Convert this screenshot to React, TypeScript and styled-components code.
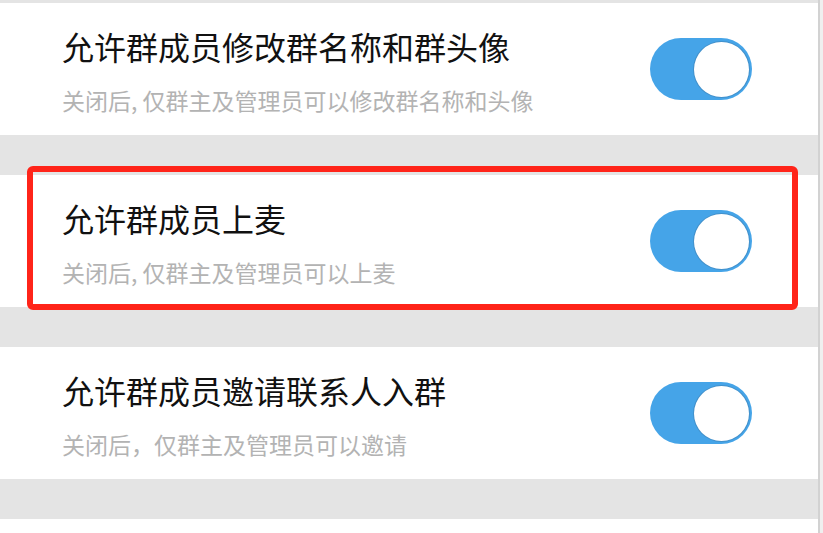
import styled, { createGlobalStyle } from 'styled-components';

const GlobalStyle = createGlobalStyle`
  html, body {
    margin: 0;
    padding: 0;
    background: #efefef;
  }
  body {
    font-family: 'Noto Sans CJK SC', 'Noto Sans', sans-serif;
  }
`;

interface SettingItem {
  id: number;
  title: string;
  desc: string;
  on: boolean;
  marked?: boolean;
}

const settings: SettingItem[] = [
  {
    id: 1,
    title: '允许群成员修改群名称和群头像',
    desc: '关闭后, 仅群主及管理员可以修改群名称和头像',
    on: true,
  },
  {
    id: 2,
    title: '允许群成员上麦',
    desc: '关闭后, 仅群主及管理员可以上麦',
    on: true,
    marked: true,
  },
  {
    id: 3,
    title: '允许群成员邀请联系人入群',
    desc: '关闭后，仅群主及管理员可以邀请',
    on: true,
  },
];

export default function App() {
  return (
    <>
      <GlobalStyle />
      <Page>
        <List>
          {settings.map((item) => (
            <Row key={item.id} $marked={item.marked}>
              <Texts>
                <Title>{item.title}</Title>
                <Desc>{item.desc}</Desc>
              </Texts>
              <Switch $on={item.on}>
                <Knob />
              </Switch>
            </Row>
          ))}
          <Row $tail />
        </List>
      </Page>
    </>
  );
}

const Page = styled.div`
  width: 818px;
  height: 533px;
  overflow: hidden;
  background: #e4e4e4;
  border-right: 2px solid #d2d2d2;
`;

const List = styled.div`
  display: flex;
  flex-direction: column;
  gap: 40px;
  padding-top: 3px;
`;

const Row = styled.div<{ $marked?: boolean; $tail?: boolean }>`
  position: relative;
  height: ${(p) => (p.$tail ? '40px' : '132px')};
  flex-shrink: 0;
  background: #fff;
  display: flex;
  align-items: center;
  justify-content: space-between;
  padding: 0 66px 0 62px;
  ${(p) =>
    p.$marked &&
    `
    &::after {
      content: '';
      position: absolute;
      left: 27px;
      right: 20px;
      top: -9px;
      bottom: -3px;
      border: 6px solid #ff2419;
      border-radius: 6px;
      pointer-events: none;
    }
  `}
`;

const Texts = styled.div`
  display: flex;
  flex-direction: column;
  gap: 22px;
  padding-top: 4px;
`;

const Title = styled.div`
  font-size: 32px;
  line-height: 36px;
  color: #111;
`;

const Desc = styled.div`
  font-size: 23px;
  line-height: 28px;
  color: #b3b3b3;
`;

const Switch = styled.div<{ $on: boolean }>`
  width: 102px;
  height: 62px;
  border-radius: 31px;
  background: ${(p) => (p.$on ? '#45a4e8' : '#e0e0e0')};
  display: flex;
  align-items: center;
  justify-content: ${(p) => (p.$on ? 'flex-end' : 'flex-start')};
  padding: 0 3px;
  box-sizing: border-box;
`;

const Knob = styled.div`
  width: 55px;
  height: 55px;
  border-radius: 50%;
  background: #fff;
  box-shadow: 0 0 0 1px rgba(60, 110, 150, 0.35);
`;
